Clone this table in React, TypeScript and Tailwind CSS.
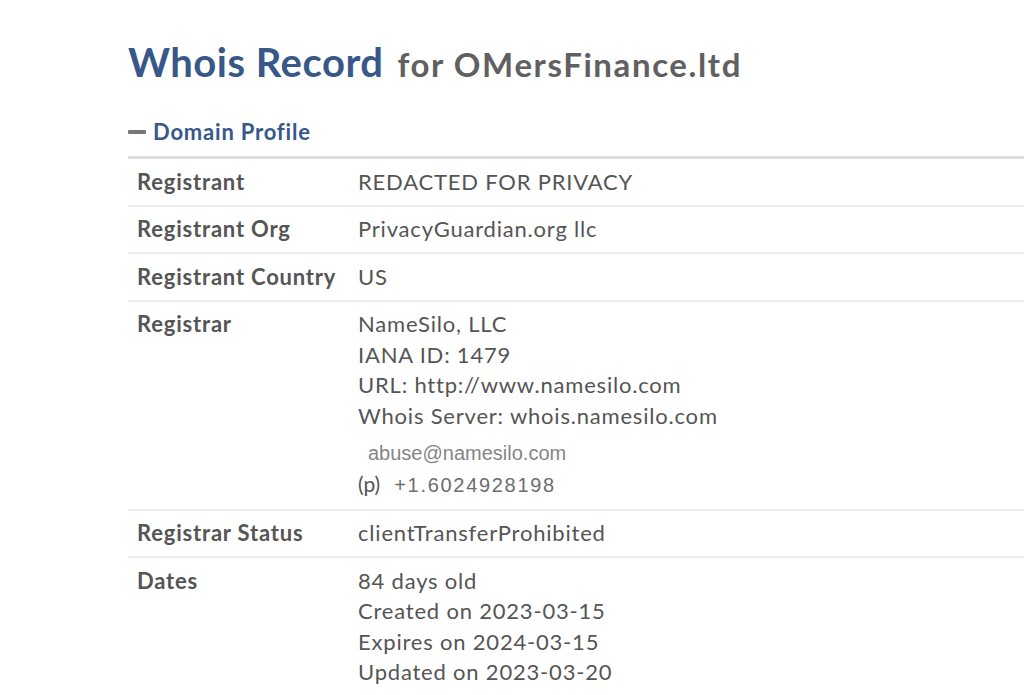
const rows: { label: string; lines: string[] }[] = [
  { label: "Registrant", lines: ["REDACTED FOR PRIVACY"] },
  { label: "Registrant Org", lines: ["PrivacyGuardian.org llc"] },
  { label: "Registrant Country", lines: ["US"] },
];

function Row({ label, children }: { label: string; children: React.ReactNode }) {
  return (
    <div className="flex border-b-2 border-[#ececec]">
      <div className="w-[221px] shrink-0 pl-[9px] py-[7.5px] font-bold text-[#555] leading-[30.5px]">
        {label}
      </div>
      <div className="pl-[9px] py-[7.5px] text-[#555] leading-[30.5px]">{children}</div>
    </div>
  );
}

export default function App() {
  return (
    <div
      className="min-h-[695px] bg-white pl-[128px] pt-[34px] text-[22px] tracking-[0.8px]"
      style={{ fontFamily: "Lato, 'Open Sans', sans-serif" }}
    >
      <h1 className="text-[40px] leading-[56px] font-bold tracking-[0.5px]">
        <span className="text-[#375888]">Whois Record</span>
        <span className="ml-[14px] text-[33px] leading-none text-[#606060] tracking-[1.6px]">
          for OMersFinance.ltd
        </span>
      </h1>

      <div className="mt-[27px] flex items-center gap-[7px] leading-[30px]">
        <span className="inline-block h-[4px] w-[18px] rounded-[1px] bg-[#777]" />
        <span className="font-bold text-[#375888]">Domain Profile</span>
      </div>

      <div className="mt-[9px] border-t-[3px] border-[#dedede]">
        {rows.map((r) => (
          <Row key={r.label} label={r.label}>
            {r.lines.map((l) => (
              <div key={l}>{l}</div>
            ))}
          </Row>
        ))}

        <Row label="Registrar">
          <div>NameSilo, LLC</div>
          <div>IANA ID: 1479</div>
          <div>URL: http://www.namesilo.com</div>
          <div>Whois Server: whois.namesilo.com</div>
          <div
            className="mt-[7px] pl-[10px] text-[20px] leading-[30px] tracking-normal text-[#858585]"
            style={{ fontFamily: "'Liberation Sans', Arial, sans-serif" }}
          >
            abuse@namesilo.com
          </div>
          <div className="flex items-baseline leading-[32px]">
            <span className="text-[21px] tracking-normal">(p)</span>
            <span
              className="ml-[14px] text-[20px] tracking-[1.7px] text-[#6d6d6d]"
              style={{ fontFamily: "'Liberation Sans', Arial, sans-serif" }}
            >
              +1.6024928198
            </span>
          </div>
        </Row>

        <Row label="Registrar Status">
          <div>clientTransferProhibited</div>
        </Row>

        <Row label="Dates">
          <div>84 days old</div>
          <div>Created on 2023-03-15</div>
          <div>Expires on 2024-03-15</div>
          <div>Updated on 2023-03-20</div>
        </Row>
      </div>
    </div>
  );
}
